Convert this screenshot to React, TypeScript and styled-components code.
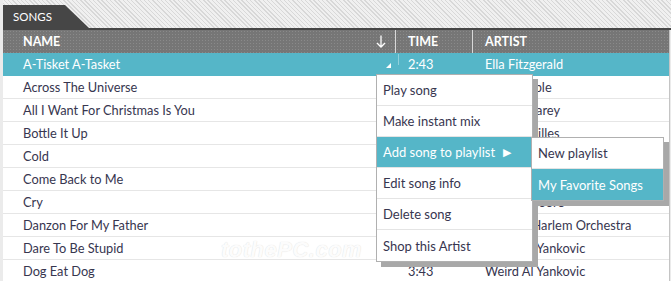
import React from 'react';
import styled, { createGlobalStyle } from 'styled-components';

type Song = { name: string; time: string; artist: string };

// cells hidden under the context menus are not visible in the shot, so they stay blank
const songs: Song[] = [
  { name: 'A-Tisket A-Tasket', time: '2:43', artist: 'Ella Fitzgerald' },
  { name: 'Across The Universe', time: '', artist: 'Fiona Apple' },
  { name: 'All I Want For Christmas Is You', time: '', artist: 'Mariah Carey' },
  { name: 'Bottle It Up', time: '', artist: 'Sara Bareilles' },
  { name: 'Cold', time: '', artist: '' },
  { name: 'Come Back to Me', time: '', artist: '' },
  { name: 'Cry', time: '', artist: 'Mandy Moore' },
  { name: 'Danzon For My Father', time: '', artist: 'Spanish Harlem Orchestra' },
  { name: 'Dare To Be Stupid', time: '', artist: 'Weird Al Yankovic' },
  { name: 'Dog Eat Dog', time: '3:43', artist: 'Weird Al Yankovic' },
];

const menuItems = [
  'Play song',
  'Make instant mix',
  'Add song to playlist',
  'Edit song info',
  'Delete song',
  'Shop this Artist',
];

const GlobalStyle = createGlobalStyle`
  body {
    margin: 0;
    background: #ebebeb;
    font-family: Lato, "Liberation Sans", sans-serif;
  }
`;

function App() {
  return (
    <>
      <GlobalStyle />
      <Frame>
        <TabBar>
          <Tab>SONGS</Tab>
        </TabBar>
        <Table>
          <HeaderRow>
            <HeadCell>
              NAME
              <SortArrow width="10" height="13" viewBox="0 0 10 13">
                <path d="M5 0.5V12M1 8l4 4 4-4" fill="none" stroke="#fff" strokeWidth="1.3" />
              </SortArrow>
            </HeadCell>
            <HeadCell>TIME</HeadCell>
            <HeadCell>ARTIST</HeadCell>
          </HeaderRow>
          {songs.map((s, i) => (
            <Row key={s.name} $selected={i === 0}>
              <Cell>
                {s.name}
                {i === 0 && <Grip />}
              </Cell>
              <Cell>{s.time}</Cell>
              <Cell>{s.artist}</Cell>
            </Row>
          ))}
        </Table>
        <Watermark>tothePC.com</Watermark>
        <Menu>
          {menuItems.map((m, i) => (
            <MenuItem key={m} $active={i === 2}>
              {m}
              {i === 2 && <SubArrow>▶</SubArrow>}
            </MenuItem>
          ))}
        </Menu>
        <SubMenu>
          <MenuItem>New playlist</MenuItem>
          <MenuItem $active>My Favorite Songs</MenuItem>
        </SubMenu>
      </Frame>
    </>
  );
}

const Frame = styled.div`
  position: relative;
  width: 671px;
  height: 281px;
  overflow: hidden;
  display: flex;
  flex-direction: column;
  background: #ebebeb;
`;

const TabBar = styled.div`
  height: 30px;
  flex: none;
  padding-top: 5px;
  box-sizing: border-box;
  margin-left: 3px;
  border-bottom: 2px solid #464646;
  background: repeating-linear-gradient(45deg, #f0f0f0 0 2px, #d8d8d8 2px 3px);
  display: flex;
  align-items: flex-end;
`;

const Tab = styled.div`
  width: 86px;
  height: 23px;
  box-sizing: border-box;
  padding: 5px 0 0 10px;
  background: #464646;
  color: #fff;
  font-size: 11.5px;
  clip-path: polygon(0 0, 62px 0, 86px 100%, 0 100%);
`;

const Table = styled.div`
  margin-left: 3px;
  width: 666px;
  flex: 1;
  background: #fff;
  border-right: 1px solid #c4c4c4;
  border-bottom: 1px solid #c4c4c4;
`;

const HeaderRow = styled.div`
  display: grid;
  grid-template-columns: 392px 77px 1fr;
  height: 23px;
  background-color: #767676;
  background-image: radial-gradient(#8a8a8a 0.6px, transparent 0.9px);
  background-size: 3px 3px;
`;

const HeadCell = styled.div`
  position: relative;
  display: flex;
  align-items: center;
  padding-left: 20px;
  color: #fff;
  font-size: 12.5px;
  font-weight: 700;
  & + & {
    border-left: 1px solid #d8d8d8;
    padding-left: 12px;
  }
`;

const SortArrow = styled.svg`
  position: absolute;
  right: 9px;
  top: 5px;
`;

const Row = styled.div<{ $selected?: boolean }>`
  display: grid;
  grid-template-columns: 392px 77px 1fr;
  height: 23px;
  box-sizing: border-box;
  border-bottom: 1px solid ${p => (p.$selected ? '#55b6c8' : '#e6e6e6')};
  background: ${p => (p.$selected ? '#55b6c8' : '#fff')};
  color: ${p => (p.$selected ? '#fff' : '#37364f')};
  font-size: 12.8px;
`;

const Cell = styled.div`
  position: relative;
  display: flex;
  align-items: center;
  padding-left: 20px;
  white-space: nowrap;
  & + & {
    padding-left: 13px;
  }
`;

const Grip = styled.span`
  position: absolute;
  right: 4px;
  bottom: 7px;
  width: 0;
  height: 0;
  border-left: 5px solid transparent;
  border-bottom: 5px solid #fff;
  &::after {
    content: '';
    position: absolute;
    left: 7px;
    top: -9px;
    width: 1px;
    height: 11px;
    background: #8fd0dc;
  }
`;

const Watermark = styled.div`
  position: absolute;
  left: 221px;
  top: 237px;
  font-family: "Liberation Sans", sans-serif;
  font-size: 22px;
  font-style: italic;
  font-weight: 700;
  letter-spacing: 0.5px;
  color: #fcfcfc;
  text-shadow: 0 0 1px rgba(0, 0, 0, 0.16);
  pointer-events: none;
`;

const Menu = styled.div`
  position: absolute;
  left: 376px;
  top: 74px;
  width: 155px;
  background: #fff;
  border: 1px solid #b0b0b0;
  box-shadow: 5px 5px 0 #a8a8a8;
`;

const SubMenu = styled(Menu)`
  left: 531px;
  top: 137px;
  width: 131px;
`;

const MenuItem = styled.div<{ $active?: boolean }>`
  height: 31px;
  box-sizing: border-box;
  display: flex;
  align-items: center;
  padding-left: 6px;
  font-size: 13px;
  border-bottom: 1px solid #e4e4e4;
  background: ${p => (p.$active ? '#55b6c8' : '#fff')};
  color: ${p => (p.$active ? '#fff' : '#37364f')};
  &:last-child {
    border-bottom: none;
  }
`;

const SubArrow = styled.span`
  margin-left: 8px;
  font-size: 11px;
`;

export default App;
